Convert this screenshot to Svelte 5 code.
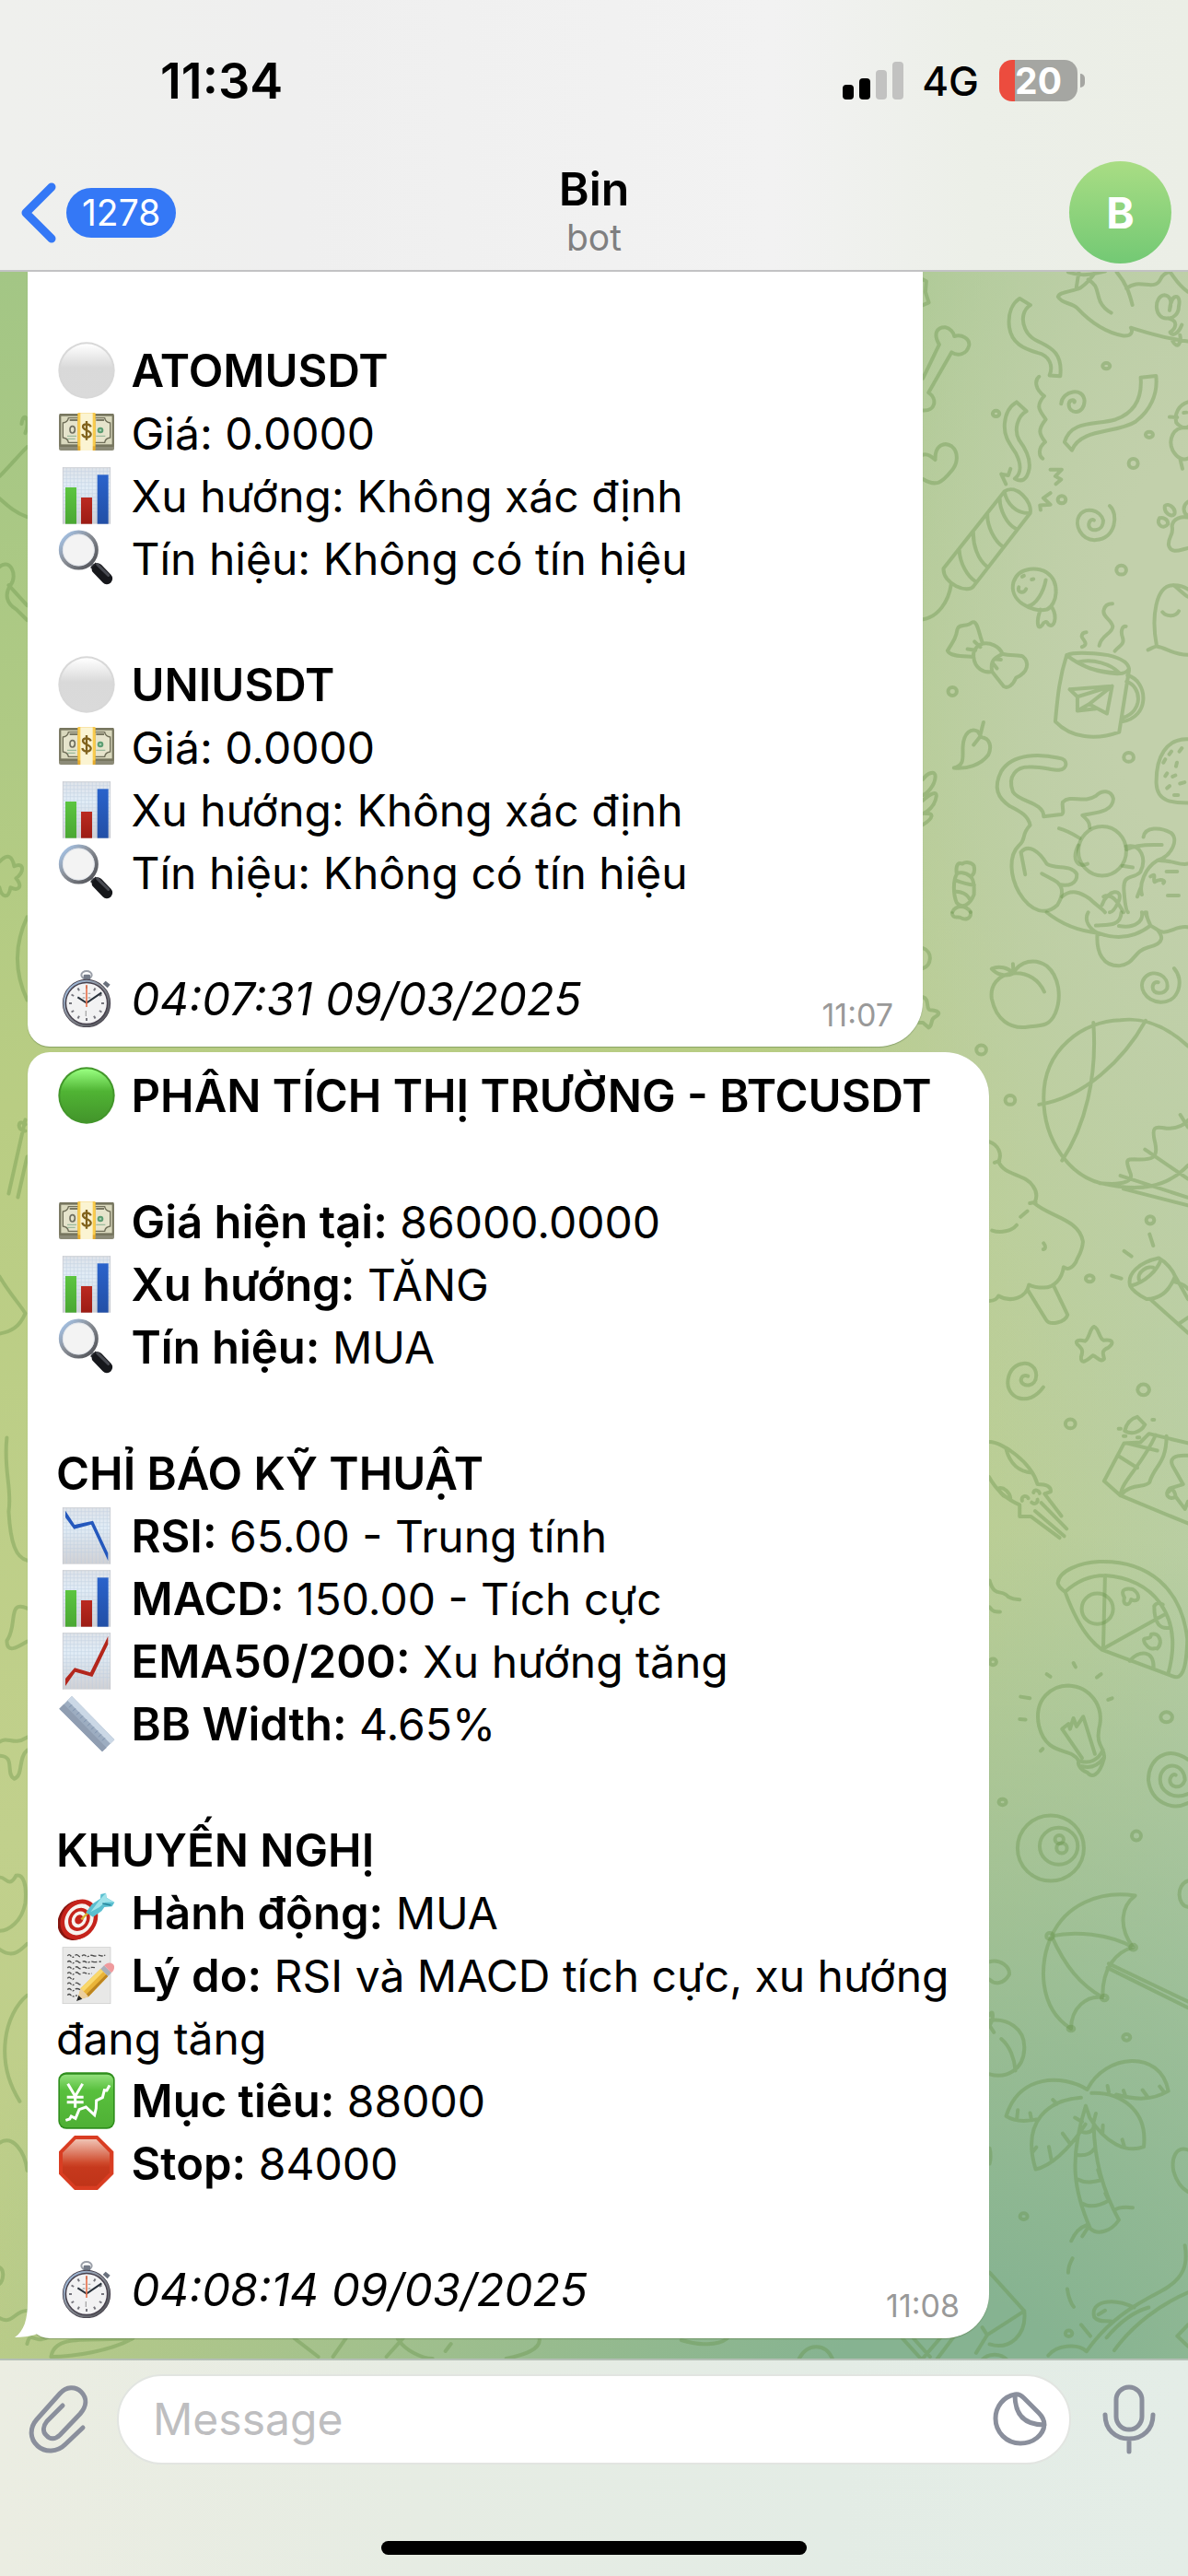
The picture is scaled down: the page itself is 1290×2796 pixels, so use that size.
<script lang="ts">
  type Line = { icon?: string; label?: string; text?: string };
  type Message = { id: number; size: string; blocks: Line[][]; stamp: string; time: string };

  const coin = (name: string): Line[] => [
    { icon: 'white', label: name },
    { icon: 'money', text: 'Giá: 0.0000' },
    { icon: 'bars', text: 'Xu hướng: Không xác định' },
    { icon: 'search', text: 'Tín hiệu: Không có tín hiệu' }
  ];

  const messages: Message[] = [
    {
      id: 1,
      size: 'first',
      blocks: [coin('ATOMUSDT'), coin('UNIUSDT')],
      stamp: '04:07:31 09/03/2025',
      time: '11:07'
    },
    {
      id: 2,
      size: 'last',
      blocks: [
        [{ icon: 'green', label: 'PHÂN TÍCH THỊ TRƯỜNG - BTCUSDT' }],
        [
          { icon: 'money', label: 'Giá hiện tại:', text: '86000.0000' },
          { icon: 'bars', label: 'Xu hướng:', text: 'TĂNG' },
          { icon: 'search', label: 'Tín hiệu:', text: 'MUA' }
        ],
        [
          { label: 'CHỈ BÁO KỸ THUẬT' },
          { icon: 'down', label: 'RSI:', text: '65.00 - Trung tính' },
          { icon: 'bars', label: 'MACD:', text: '150.00 - Tích cực' },
          { icon: 'up', label: 'EMA50/200:', text: 'Xu hướng tăng' },
          { icon: 'ruler', label: 'BB Width:', text: '4.65%' }
        ],
        [
          { label: 'KHUYẾN NGHỊ' },
          { icon: 'target', label: 'Hành động:', text: 'MUA' },
          { icon: 'memo', label: 'Lý do:', text: 'RSI và MACD tích cực, xu hướng đang tăng' },
          { icon: 'yen', label: 'Mục tiêu:', text: '88000' },
          { icon: 'stop', label: 'Stop:', text: '84000' }
        ]
      ],
      stamp: '04:08:14 09/03/2025',
      time: '11:08'
    }
  ];

  const ticks = Array.from({ length: 12 }, (_, i) => i * 30);
  const grid = Array.from({ length: 12 }, (_, i) => 28 + i * 12);
  let draft = $state('');
</script>

{#snippet sheet()}
  <rect x="15" y="1" width="156" height="184" fill="url(#paper)" />
  <g stroke="#b9cbe0" stroke-width="2" opacity=".6">
    {#each grid as g}
      <path d="M{g} 3V183" />
      <path d="M17 {g - 14}H169" />
    {/each}
  </g>
  <path d="M16 1V185M170 1V185M15 2H171" stroke="#c3c6cc" stroke-width="2" fill="none" />
{/snippet}

{#snippet emoji(name: string)}
  <svg class="emoji" viewBox="0 0 186 186" aria-hidden="true">
    {#if name === 'white' || name === 'green'}
      <circle cx="93" cy="93" r="92" fill={name === 'white' ? '#d8d8d8' : '#42962a'} />
      <circle cx="93" cy="93" r="86" fill={name === 'white' ? 'url(#ballWhite)' : 'url(#ballGreen)'} />
    {:else if name === 'money'}
      <rect x="3" y="32" width="180" height="118" rx="6" fill="#8c8b78" />
      <rect x="4" y="30" width="178" height="108" rx="3" fill="#77765f" />
      <rect x="10" y="38" width="166" height="92" fill="#d9d8bd" />
      <path d="M16 60Q32 58 34 44H152Q154 58 170 60V108Q154 110 152 124H34Q32 110 16 108Z" fill="#e6e4cc" stroke="#6f6e58" stroke-width="4" />
      <path d="M38 51H64M124 51H150" stroke="#55543f" stroke-width="5" />
      <path d="M30 103H60M30 112H56M124 103H154" stroke="#9dba9c" stroke-width="4" />
      <ellipse cx="47" cy="82" rx="8" ry="11" fill="none" stroke="#6f6f60" stroke-width="5" />
      <circle cx="138" cy="84" r="10" fill="#5b9c71" />
      <circle cx="138" cy="84" r="4" fill="#a5cfae" />
      <rect x="64" y="28" width="58" height="122" rx="3" fill="#e6ab2c" />
      <rect x="65" y="28" width="56" height="108" fill="#f9cc4c" />
      <rect x="73" y="28" width="40" height="122" fill="#fbf4d2" />
      <path d="M93 54V116M107 73C103 61 81 61 81 73C81 85 107 83 107 97C107 110 82 110 79 96" fill="none" stroke="#80621c" stroke-width="7" />
    {:else if name === 'bars'}
      {@render sheet()}
      <rect x="24" y="66" width="36" height="119" fill="url(#barGreen)" />
      <rect x="75" y="99" width="36" height="86" fill="url(#barRed)" />
      <rect x="128" y="25" width="36" height="160" fill="url(#barBlue)" />
    {:else if name === 'down'}
      {@render sheet()}
      <path d="M24 11V33L52 71L108 56L163 174V149L114 44L54 57Z" fill="#2458bd" />
    {:else if name === 'up'}
      {@render sheet()}
      <path d="M24 174V150L54 115L105 130L163 12V38L112 144L56 128Z" fill="#b3261c" />
    {:else if name === 'search'}
      <path d="M107 110L124 127" stroke="#8d9096" stroke-width="12" />
      <circle cx="67" cy="66" r="58" fill="#f3f3f3" stroke="url(#rim)" stroke-width="13" />
      <circle cx="67" cy="66" r="51" fill="none" stroke="#dfe3ea" stroke-width="3" />
      <path d="M128 127L159 159" stroke="#16171b" stroke-width="37" stroke-linecap="round" />
      <path d="M128 113L164 148" stroke="#484a51" stroke-width="9" stroke-linecap="round" />
      <path d="M107 125L124 108" stroke="#25262b" stroke-width="5" />
    {:else if name === 'ruler'}
      <path d="M4 44L45 3L184 145L144 184Z" fill="#9dadc1" />
      <path d="M45 3L184 145L171 158L31 17Z" fill="#cbd8e6" />
      <path d="M4 44L19 29L158 171L144 184Z" fill="#8f9db1" />
      <g stroke="#7d92ae" stroke-width="3">
        {#each grid.slice(1, 11) as g}
          <path d="M{g + 5} {g - 9}L{g - 4} {g}" />
        {/each}
      </g>
    {:else if name === 'target'}
      <g transform="rotate(35 66 112)">
        <ellipse cx="64" cy="120" rx="57" ry="69" fill="#83150f" />
        <ellipse cx="70" cy="113" rx="57" ry="69" fill="#c5231b" />
        <ellipse cx="70" cy="113" rx="44" ry="54" fill="#f7f3ef" />
        <ellipse cx="70" cy="113" rx="33" ry="40" fill="#c5231b" />
        <ellipse cx="70" cy="113" rx="23" ry="28" fill="#f7f3ef" />
        <ellipse cx="70" cy="113" rx="13" ry="16" fill="#c5231b" />
      </g>
      <path d="M76 115L104 87" stroke="#d6b332" stroke-width="7" />
      <path d="M91 92L110 66L138 47L139 33L156 29L158 44L184 59L176 73L151 75L142 88L114 107Z" fill="#5abfd0" />
      <path d="M139 47L156 29L158 45L184 59L154 59L134 76L106 91Z" fill="#9fe3ea" />
      <path d="M145 63L172 69" stroke="#27869c" stroke-width="4" />
    {:else if name === 'memo'}
      <rect x="15" y="2" width="156" height="183" fill="#e8e8e7" stroke="#c9c9c8" stroke-width="2" />
      <g fill="none" stroke="#4b4b4b" stroke-width="4" stroke-dasharray="15 4 6 5 19 7">
        <path d="M31 30Q36 22 42 30T54 30T66 29T78 30T90 29T102 30T114 29T126 29T138 29T154 27" />
        <path d="M31 50Q36 43 42 50T54 50T66 49T78 50T90 49T102 50T114 49T140 48" />
        <path d="M31 69Q36 62 42 69T54 69T66 68T78 69T90 68T102 69T120 68" />
        <path d="M31 87Q36 80 42 87T54 87T66 86T78 87T90 86T110 87" />
        <path d="M31 103Q36 96 42 103T52 103" />
        <path d="M31 121Q36 114 42 121T54 121T66 120T80 121" />
        <path d="M31 140Q36 133 42 140T54 140T72 140" />
        <path d="M31 158Q36 151 42 158T62 158" />
      </g>
      <path d="M63 173L74 135L139 72L163 96L99 163Z" fill="#e9b439" />
      <path d="M74 135L139 72L148 81L83 146Z" fill="#f9d86b" />
      <path d="M92 155L157 90L163 96L99 163Z" fill="#bd851f" />
      <path d="M63 173L74 135L84 146L92 154L99 163Z" fill="#ecd0a0" />
      <path d="M60 177L67 158L79 170Z" fill="#262626" />
      <path d="M139 72L150 61L174 85L163 96Z" fill="#a9afb9" />
      <path d="M150 61C160 48 180 50 183 63C184 72 181 79 174 85Z" fill="#ef9a9d" />
    {:else if name === 'yen'}
      <rect x="1" y="1" width="184" height="184" rx="26" fill="#2f8f1d" />
      <rect x="6" y="8" width="174" height="172" rx="20" fill="url(#yenFace)" />
      <g fill="none" stroke="#fff" stroke-width="9">
        <path d="M32 38L56 79L80 38M56 79V116M29 82H83M29 98H83" />
        <path d="M25 157L38 153L43 144L57 151L69 122L91 114L119 140L124 119L125 93L145 83L151 59L159 60L168 43" />
      </g>
    {:else if name === 'stop'}
      <path d="M54 3H129L181 55V128L129 180H54L3 128V55Z" fill="#d93d22" />
      <path d="M58 15H125L168 59V124L125 167H58L15 124V59Z" fill="url(#stopFace)" />
    {:else if name === 'clock'}
      <ellipse cx="93" cy="16" rx="17" ry="13" fill="none" stroke="#9a9fa8" stroke-width="6" />
      <rect x="83" y="14" width="22" height="22" rx="4" fill="#747b88" />
      <path d="M146 44L155 35L170 47L161 58Z" fill="#6a717d" />
      <circle cx="93" cy="108" r="72" fill="#f2f2f3" stroke="#47414d" stroke-width="13" />
      <circle cx="93" cy="108" r="73" fill="none" stroke="url(#rim)" stroke-width="6" />
      {#each ticks as t}
        <path d="M93 51V60" stroke="#75757c" stroke-width="6" transform="rotate({t} 93 108)" />
      {/each}
      <path d="M80 76H88M98 76H106M80 90H88M98 90H106M91 132V150" stroke="#aaa" stroke-width="4" />
      <path d="M64 88L93 107L142 73" fill="none" stroke="#29323b" stroke-width="6" />
      <path d="M93 48V120" stroke="#e8734f" stroke-width="5" />
    {/if}
  </svg>
{/snippet}

<svg class="defs" aria-hidden="true">
  <defs>
    <linearGradient id="ballWhite" x2="0" y2="1"><stop offset="0" stop-color="#fff" /><stop offset=".45" stop-color="#d9d9d9" /><stop offset="1" stop-color="#dadada" /></linearGradient>
    <linearGradient id="ballGreen" x2="0" y2="1"><stop offset="0" stop-color="#98ff80" /><stop offset=".42" stop-color="#50b434" /><stop offset="1" stop-color="#43952b" /></linearGradient>
    <linearGradient id="paper" x2="0" y2="1"><stop offset="0" stop-color="#dfe3e9" /><stop offset=".35" stop-color="#e2edf7" /><stop offset="1" stop-color="#cfd0d4" /></linearGradient>
    <linearGradient id="barGreen" x2="0" y2="1"><stop offset="0" stop-color="#5cc540" /><stop offset="1" stop-color="#4aa733" /></linearGradient>
    <linearGradient id="barRed" x2="0" y2="1"><stop offset="0" stop-color="#bb2a20" /><stop offset="1" stop-color="#9c1c14" /></linearGradient>
    <linearGradient id="barBlue" x2="0" y2="1"><stop offset="0" stop-color="#2a63cb" /><stop offset="1" stop-color="#224fa6" /></linearGradient>
    <linearGradient id="rim" x2="1" y2="1"><stop offset="0" stop-color="#a9cbf3" /><stop offset=".45" stop-color="#8b9098" /><stop offset="1" stop-color="#4a4b50" /></linearGradient>
    <linearGradient id="yenFace" x2="0" y2="1"><stop offset="0" stop-color="#93e07c" /><stop offset=".3" stop-color="#58c03d" /><stop offset="1" stop-color="#4fb035" /></linearGradient>
    <linearGradient id="stopFace" x2="0" y2="1"><stop offset="0" stop-color="#f0c3b4" /><stop offset=".5" stop-color="#cf4a2c" /><stop offset=".6" stop-color="#c6391d" /><stop offset="1" stop-color="#c03419" /></linearGradient>
  </defs>
</svg>

<div class="app">
  <header>
    <div class="status">
      <span class="clock">11:34</span>
      <div class="indicators">
        <svg class="signal" viewBox="0 0 66 42" aria-label="Signal">
          <rect x="0" y="25" width="12" height="16" rx="4" />
          <rect x="18" y="18" width="12" height="23" rx="4" />
          <rect x="36" y="9" width="12" height="32" rx="4" fill="#c2c2c1" />
          <rect x="54" y="0" width="12" height="41" rx="4" fill="#c2c2c1" />
        </svg>
        <span class="network">4G</span>
        <span class="battery">20</span>
      </div>
    </div>
    <nav>
      <button class="back" aria-label="Back, 1278 unread">
        <svg class="chevron" viewBox="0 0 40 66" aria-hidden="true"><path d="M34 5L6 33L34 61" /></svg>
        <span class="count">1278</span>
      </button>
      <div class="title">
        <h1>Bin</h1>
        <span>bot</span>
      </div>
      <button class="avatar" aria-label="Profile">B</button>
    </nav>
  </header>

  <main>
    <svg class="doodles" viewBox="0 0 1290 2264" preserveAspectRatio="xMaxYMin slice" aria-hidden="true">
      <g transform="translate(990 -5) scale(.3333 .4464)">
        <path d="M37 30L48 34L45 60L56 86L37 92M37 270L90 188C68 160 85 145 110 146C125 148 137 158 139 168C165 162 190 175 187 190C180 213 150 217 130 207L55 305C85 320 78 350 37 348M37 456C50 452 65 460 77 468C75 430 110 425 130 435C155 450 150 478 130 495C100 523 80 535 37 515" />
        <path d="M352 76L387 92C365 102 355 125 370 150C390 185 440 180 470 210C485 225 487 245 484 265L449 263C462 240 450 215 410 208C365 198 325 185 318 145C313 112 328 88 352 76ZM342 328L374 350C345 362 332 395 350 420C380 450 395 480 375 508C365 520 350 520 336 514C360 500 355 475 340 453C315 425 300 410 303 380C306 355 318 338 342 328M415 266C400 275 402 297 432 313C400 340 420 350 437 370C410 395 415 405 435 425C410 440 415 460 427 465" />
        <path d="M487 332C490 300 560 290 563 325C562 360 510 358 512 332C515 320 535 322 530 328M746 268L796 264C803 310 775 350 730 375C670 405 550 390 522 445L498 425C520 370 600 385 665 370C720 355 752 325 746 268M477 72C480 60 520 60 550 50C570 40 585 28 600 10M477 72C490 90 520 85 540 100C590 140 640 160 690 167C715 168 722 158 714 147C750 155 830 175 900 180M575 30C610 45 600 60 615 85C625 100 635 105 650 111M510 12C560 25 600 15 630 10M545 10L536 52M668 12C700 40 710 65 719 92M700 52C740 25 790 60 810 30C815 20 830 12 842 12C860 30 870 45 900 60M835 124C790 130 785 70 825 68C840 70 850 80 840 105C845 60 880 65 870 95C870 115 850 125 835 124M838 125C870 130 860 150 842 158C850 170 870 160 880 140M850 180C865 200 880 185 874 165" />
        <ellipse cx="634" cy="240" rx="12" ry="7" /><ellipse cx="275" cy="356" rx="11" ry="7" /><ellipse cx="774" cy="407" rx="12" ry="7" /><ellipse cx="722" cy="477" rx="15" ry="11" /><ellipse cx="489" cy="565" rx="13" ry="9" /><ellipse cx="683" cy="736" rx="16" ry="11" /><ellipse cx="133" cy="1031" rx="14" ry="10" /><ellipse cx="707" cy="1191" rx="16" ry="11" />
        <path d="M900 328C870 335 855 355 862 378C880 395 900 390 900 388M900 390C850 385 835 420 850 445C865 465 885 470 900 465M875 468L882 490M840 364L865 365M886 354L895 353M292 503L315 506L322 490M292 503L307 527M452 492L489 492L468 508L487 516L470 527M452 549L429 561L452 577L418 579L420 590" />
        <path d="M104 732L302 545C340 525 395 570 386 598L202 775C185 795 100 770 104 732ZM302 545C310 575 340 600 386 598M287 562C287 590 310 625 340 636M247 600C245 630 270 665 298 680M201 645C200 675 215 710 246 728M155 687C158 720 180 750 208 764M129 770C120 815 85 850 37 856" />
        <path d="M645 580C675 600 665 660 600 663C550 665 530 625 545 605C565 580 615 590 624 615C625 645 575 645 577 625C580 612 590 613 594 615M332 765C350 725 420 730 440 742C485 765 475 820 440 832C390 840 315 810 332 765ZM437 760C430 790 405 820 379 824M420 832C405 860 410 885 425 870C430 862 440 858 445 868C465 880 475 850 458 828M349 778C342 790 365 795 373 782M360 752L366 750M391 759L397 758" />
        <path d="M117 932C135 910 145 900 149 880C155 865 180 875 195 864C215 855 218 890 232 915C255 912 285 920 296 940C320 945 350 942 362 946C385 960 380 985 340 998C330 1015 315 1025 300 1019L262 983C235 987 205 975 202 947C170 945 125 947 117 932M232 915C210 920 198 935 202 947M296 940C270 950 255 955 262 983M205 910L224 923M182 928L208 931M270 952L291 954M265 963L278 975" />
        <path d="M505 943C480 1000 475 1050 468 1104C520 1145 600 1150 676 1130L708 980C710 960 680 950 640 943C590 938 530 935 505 943C550 970 600 985 670 988C690 988 705 985 708 975M541 960C590 950 650 965 676 986C630 985 580 980 541 960M703 992C770 1005 780 1095 682 1105M700 1007C750 1020 755 1080 688 1095M515 1026L653 1018L636 1085L578 1062L653 1018L540 1044L515 1026M540 1044L540 1078L600 1073M540 1078L578 1062" />
        <path d="M555 923C580 915 555 905 554 897C555 890 562 887 569 887M611 920C615 895 655 890 655 873C650 855 620 850 626 833C630 820 645 818 654 818M662 933C675 920 695 918 687 900C680 885 685 872 698 873M770 930C785 925 795 920 800 922C830 925 850 942 900 942M798 920C780 850 795 775 850 773C870 772 890 778 900 783M853 773C870 782 885 795 900 801M817 838C830 850 860 850 870 836M138 1217C175 1210 165 1190 167 1165C170 1130 195 1120 215 1128L227 1142C255 1145 262 1165 250 1185C225 1210 180 1220 138 1217M234 1106L222 1142L202 1161M37 1245C50 1230 80 1220 77 1240C75 1260 50 1280 37 1283M37 1296C60 1280 85 1270 80 1288C75 1310 50 1325 37 1328M45 1328C75 1325 70 1340 37 1355" />
        <path d="M807 610C795 625 820 640 835 624C835 610 815 608 807 610M825 580C820 595 845 610 856 600C862 585 835 572 825 580M900 570C880 580 885 600 900 603M900 608C880 605 850 610 848 630C855 650 835 655 837 675C845 700 880 685 900 683M900 1147C830 1145 795 1190 797 1255C800 1300 850 1302 900 1302" />
        <path d="M820 1204L826 1196M839 1184L846 1177M872 1177L880 1169M861 1213L864 1204M826 1237L832 1230M850 1238L859 1235M832 1266L840 1261M874 1255L889 1252M855 1283L868 1283" />
        <path d="M430 1335L487 1330C500 1328 488 1310 492 1300C520 1280 560 1305 600 1285C620 1270 650 1270 657 1292C655 1325 600 1325 556 1332C575 1345 580 1350 580 1362M430 1335C430 1300 350 1300 330 1275C310 1235 345 1215 380 1215C420 1212 450 1222 480 1222C510 1220 510 1195 480 1193C420 1183 330 1180 292 1225C265 1265 280 1290 320 1310C360 1325 380 1335 386 1356C355 1380 375 1390 350 1405C315 1430 320 1480 350 1520C390 1570 440 1575 475 1550C500 1520 490 1500 465 1490L424 1474M356 1422C380 1400 415 1420 440 1450C470 1465 520 1450 538 1475C540 1500 510 1505 480 1500M356 1422L370 1476" />
        <ellipse cx="621" cy="1419" rx="78" ry="60" />
        <path d="M480 1364C510 1370 530 1380 548 1388M543 1405C520 1440 540 1460 573 1450M698 1408C750 1400 765 1440 745 1470C720 1490 685 1470 692 1520C695 1550 700 1568 705 1568M700 1415C740 1400 790 1405 815 1404M686 1455L720 1459M755 1385C760 1360 810 1360 845 1375C870 1390 850 1430 800 1442C760 1460 740 1500 750 1525M800 1442C850 1440 870 1455 900 1450M778 1481C800 1470 785 1485 791 1494C810 1485 830 1490 820 1497M830 1469H865M834 1527H870M490 1530C520 1510 550 1520 580 1535C600 1550 620 1558 630 1568M620 1550C640 1510 690 1510 675 1540C660 1565 650 1568 645 1568M625 1530C650 1520 670 1540 690 1568M735 1530L745 1510" />
        <path d="M147 1475C143 1455 150 1445 165 1450C175 1445 195 1445 203 1455C208 1470 200 1480 190 1480M147 1475C135 1490 135 1525 147 1545C165 1560 190 1550 203 1525C205 1500 200 1485 190 1480C175 1470 150 1470 147 1475M142 1490C160 1495 180 1500 204 1502M141 1517C160 1518 180 1520 192 1540M133 1567C145 1550 175 1550 192 1567" />
      </g>
      <g transform="translate(990 695) scale(.3333 .4464)">
        <path d="M132 2C135 18 150 8 160 13C175 20 195 15 192 0M37 87C70 95 65 130 37 136M37 206C60 210 45 235 60 237C85 238 100 245 75 255C60 260 70 275 55 280L37 268L22 268" />
        <path d="M330 148C280 150 255 180 261 210C275 260 320 285 380 278C430 275 450 275 468 245C490 205 480 155 440 130C400 110 355 118 330 148C380 145 415 165 432 193M330 125L332 148M261 137C285 128 315 135 332 148C305 158 275 150 261 137M855 136C890 165 870 220 810 218C760 215 735 180 760 158C790 135 840 155 832 185C820 200 785 200 785 182C785 172 795 168 803 170" />
        <path d="M440 0C490 30 540 45 607 50C660 65 720 65 778 32L760 0M575 0C560 20 580 40 605 50M605 50C600 100 625 130 675 130C730 125 720 95 770 85C830 75 815 55 800 42L778 32C770 20 765 10 765 0M600 32C640 30 680 35 683 0M750 0C755 20 730 40 675 33M800 42C830 60 860 30 900 36" />
        <path d="M900 325C820 270 750 255 680 262C560 265 430 330 430 450C430 560 520 640 615 658C740 680 830 670 900 615M415 467C560 450 690 360 762 263M592 268C605 400 565 520 490 603M612 658C700 665 720 650 713 635C695 600 700 600 725 600C780 602 805 600 793 560C780 520 790 520 830 525C870 525 890 515 900 505M680 640L900 693M760 576L900 648M875 492L900 522M690 672L900 712" />
        <ellipse cx="227" cy="334" rx="16" ry="11" /><ellipse cx="321" cy="456" rx="16" ry="11" /><ellipse cx="777" cy="748" rx="13" ry="9" /><ellipse cx="580" cy="890" rx="13" ry="8" /><ellipse cx="755" cy="1160" rx="19" ry="13" /><ellipse cx="517" cy="1243" rx="16" ry="11" />
        <path d="M252 557C285 565 295 590 283 605C300 640 370 635 395 665C410 680 408 695 400 707C450 740 545 745 558 800C555 830 540 835 535 850C520 868 505 868 495 862C490 890 465 912 430 912C415 912 395 910 382 905C375 935 325 950 283 932C275 945 260 944 252 944M262 773C290 780 325 775 342 760M355 740L377 726M270 608L286 604M385 707L404 704M430 804C438 812 436 818 429 819M380 920L438 990C450 1005 500 997 508 978L463 908" />
        <path d="M712 908C700 880 740 850 805 840C830 850 850 870 858 884C840 920 810 940 765 940C740 930 720 920 712 908C760 900 800 870 812 844M742 895C730 875 770 855 792 865M780 942L900 1022M858 884L900 940M870 1000L900 985M852 897C870 900 890 905 900 915M775 782L787 810M692 823L716 836M652 883L683 890" />
        <path d="M594 1007C610 1010 610 1035 625 1040C650 1037 665 1045 640 1058C615 1065 625 1075 627 1085C615 1095 605 1080 590 1077C570 1090 550 1100 552 1080C560 1065 555 1060 540 1050C530 1040 545 1038 565 1042C580 1035 580 1010 594 1007M429 1154C380 1205 305 1180 314 1135C325 1085 405 1085 406 1125C405 1155 360 1155 356 1137C358 1125 370 1124 379 1127" />
        <path d="M252 1287C290 1285 390 1335 410 1390C440 1390 455 1395 453 1408L433 1413M252 1372C280 1410 320 1430 352 1440V1468H388L482 1520M308 1305C320 1340 350 1360 392 1362M282 1400C300 1395 320 1410 322 1424C300 1422 290 1415 282 1400M433 1413L488 1467M422 1435L505 1498M402 1455L497 1516M360 1430C355 1418 375 1415 380 1424M397 1410C400 1400 415 1405 417 1412M391 1434C400 1440 412 1435 410 1427" />
        <path d="M627 1382L692 1290L745 1288L773 1267L900 1290M627 1382L680 1417L900 1485M680 1417C685 1380 750 1345 795 1270M680 1417C715 1385 760 1400 775 1385C790 1345 830 1340 830 1273M671 1320L735 1350M700 1290L800 1308M694 1260C700 1240 715 1230 735 1226L760 1245C745 1265 715 1270 694 1260M900 1320C850 1318 840 1330 850 1345L884 1390L840 1400C820 1415 840 1430 860 1420C855 1400 845 1400 838 1408M860 1420L890 1450L900 1432" />
        <path d="M674 1255H681M690 1273H697M735 1276H742M784 1233H790" />
      </g>
      <g transform="translate(1060 1395) scale(.3333 .5549)">
        <path d="M44 45C60 80 85 60 105 77C120 82 130 82 142 82M44 97C55 107 65 106 78 106M266 50C270 25 340 10 400 8C560 5 670 60 688 160C685 220 670 240 640 232L410 180C350 155 310 100 290 67C280 62 270 60 266 50M290 67C330 45 370 35 420 35C570 40 680 110 625 228M420 35L414 178L612 112M500 202C530 180 580 180 578 217M580 95C580 130 600 140 630 137M580 95C590 85 600 90 608 92" />
        <ellipse cx="395" cy="100" rx="51" ry="30" />
        <path d="M483 78C465 60 495 60 510 62C535 70 535 90 505 82C500 95 475 95 483 78M550 168C535 150 570 165 570 150C595 145 610 165 590 178C580 175 570 185 550 168" />
        <path d="M205 330C185 275 250 250 300 250C370 252 420 290 400 335C390 370 420 370 417 392C400 430 375 430 362 420C340 415 330 405 334 397C310 370 230 390 205 330ZM280 335L345 392M280 335L301 325L306 335L317 314L327 330L349 311L387 384M334 397C370 405 400 395 413 376M345 408C370 412 395 408 415 392M317 206L324 214M230 228L242 233M393 234L407 228M145 272L175 275M142 316L161 317M430 278L443 275M210 378L217 374" />
        <ellipse cx="243" cy="568" rx="108" ry="64" /><ellipse cx="269" cy="564" rx="62" ry="36" /><ellipse cx="271" cy="551" rx="14" ry="8" /><ellipse cx="279" cy="568" rx="17" ry="10" />
        <ellipse cx="55" cy="204" rx="11" ry="6" /><ellipse cx="620" cy="312" rx="19" ry="10" /><ellipse cx="86" cy="478" rx="12" ry="6" /><ellipse cx="522" cy="544" rx="15" ry="9" /><ellipse cx="490" cy="938" rx="12" ry="6" /><ellipse cx="155" cy="1288" rx="12" ry="6" /><ellipse cx="302" cy="1517" rx="11" ry="6" />
        <path d="M690 395C620 365 560 395 561 435C570 480 640 495 690 480M690 462C640 475 590 455 601 425C620 395 680 405 680 435C670 455 625 450 632 432C637 424 645 423 650 425M690 632C650 640 655 680 690 683" />
        <path d="M246 740C290 680 400 650 518 661C475 680 460 720 511 762C460 770 410 800 412 860C360 855 310 880 309 921C200 880 205 790 246 740C320 730 430 735 511 762M246 740C290 800 340 835 412 860M432 794L690 868M428 802L690 880" />
        <ellipse cx="240" cy="740" rx="11" ry="6" /><ellipse cx="512" cy="762" rx="10" ry="5" /><ellipse cx="418" cy="861" rx="10" ry="5" /><ellipse cx="309" cy="921" rx="10" ry="4" />
        <path d="M44 790C80 785 110 800 108 815C90 835 60 835 44 825M44 905C100 900 160 920 157 960C155 1000 100 1020 44 1010M82 941C110 955 125 980 128 1003M44 895C55 880 60 900 44 915L58 928M44 1155C48 1165 48 1175 44 1185" />
        <path d="M362 1040C280 1010 140 1010 98 1092C130 1105 170 1102 202 1098M342 1056C240 1060 145 1100 194 1196C240 1190 300 1160 356 1108M362 1040C420 970 600 960 626 1043C570 1062 520 1060 456 1050M376 1047C470 1045 560 1080 546 1152C490 1165 420 1145 370 1095L357 1072M357 1072C300 1180 320 1240 372 1312C395 1325 440 1318 465 1295C410 1235 385 1175 383 1110M338 1118C350 1128 375 1125 382 1115M330 1168C355 1170 375 1165 386 1155M327 1215C360 1225 385 1220 407 1217L397 1197M343 1262C370 1272 400 1268 432 1257L421 1243M453 1275C470 1268 495 1270 510 1271M310 1336C325 1315 345 1308 360 1305M346 1327L364 1310M133 1096L136 1080M180 1098L176 1086M263 1068L250 1060M183 1163L196 1153M246 1180L237 1152M305 1145L282 1126M345 1103L322 1095M383 1103L390 1087M412 1125L413 1110M482 1150L476 1138M432 1045L428 1033M488 1055L480 1042M558 1054L542 1041M612 1045L598 1034" />
        <path d="M690 1158C650 1150 635 1175 643 1200C655 1225 675 1235 690 1240M314 1370C300 1385 300 1395 300 1398M297 1430C300 1445 310 1460 318 1465M342 1500L372 1522M44 1398L157 1473L36 1520M157 1473C165 1520 110 1550 44 1538M0 1555L36 1520L20 1505M20 1568C40 1555 80 1555 100 1568M235 1560C260 1540 330 1535 360 1552C430 1490 520 1460 600 1435C680 1410 690 1380 680 1345M425 1525C460 1500 510 1475 562 1466M450 1550C510 1500 600 1460 690 1437M385 1485C370 1455 440 1445 515 1466M385 1485C400 1497 425 1490 445 1494M398 1480L420 1472M655 1522L690 1500M655 1522L690 1542" />
      </g>
      <path d="M0 222C12 210 20 200 30 190M0 246C10 255 18 262 30 266M0 320C12 310 20 330 12 340C5 350 8 360 18 366L30 378M10 340L30 362M24 165C26 150 34 160 28 175M0 640C10 630 14 635 16 645C26 640 28 650 18 658C26 668 20 672 12 668C10 682 2 678 0 668M30 700C16 730 16 760 30 790M28 925C20 918 18 932 28 932M10 1000L28 920M20 1004L30 960M0 1090C12 1110 22 1120 28 1130C22 1145 12 1150 0 1152M8 1265C4 1300 14 1320 10 1345C12 1380 18 1395 30 1398M30 1450C8 1440 20 1470 8 1485C8 1500 20 1492 30 1486M0 1595C10 1588 14 1600 30 1590M0 1610C18 1610 6 1630 16 1635C26 1632 20 1612 30 1604M0 1742C6 1740 10 1755 18 1740C26 1738 30 1750 28 1770C24 1790 10 1800 0 1800M0 1820C14 1830 22 1822 30 1814M30 1870C6 1890 -6 1940 22 1985M0 2030C14 2020 28 2040 30 2060M0 2165C6 2168 4 2180 0 2183M0 2220C14 2228 16 2212 30 2212M30 2248C34 2232 38 2250 54 2240M56 2262C60 2236 100 2246 145 2242C120 2256 80 2262 56 2262M320 2242L346 2262M362 2262L376 2242M420 2262L438 2242M432 2242C440 2256 460 2264 470 2264M484 2256L490 2248M586 2242C588 2254 570 2260 550 2264M740 2244C760 2250 780 2250 790 2242M868 2264C876 2248 896 2246 904 2264M980 2242L1000 2264M992 2242L1010 2262M1002 2264L1026 2236M1018 2264L1036 2240" />
    </svg>

    {#each messages as message (message.id)}
      <article class="bubble {message.size}">
        {#each message.blocks as block}
          <div class="block">
            {#each block as line}
              <p>{#if line.icon}{@render emoji(line.icon)}{' '}{/if}{#if line.label}<strong>{line.label}</strong>{' '}{/if}{line.text ?? ''}</p>
            {/each}
          </div>
        {/each}
        <div class="foot">
          <p>{@render emoji('clock')}{' '}<em>{message.stamp}</em></p>
          <time>{message.time}</time>
        </div>
        {#if message.size === 'last'}
          <svg class="tail" viewBox="0 0 50 40" aria-hidden="true"><path d="M14 0C14 20 10 32 0 39C16 39 28 35 34 30C40 35 44 38 50 40V0Z" /></svg>
        {/if}
      </article>
    {/each}
  </main>

  <footer>
    <form>
      <button type="button" aria-label="Attach">
        <svg class="clip" viewBox="0 0 68 78" aria-hidden="true"><path d="M61 48L42 66C33 75 20 75 12 68C3 60 3 48 11 39L36 11C43 3 53 3 59 9C66 16 65 25 58 33L36 56C31 61 25 61 21 56C17 52 18 46 22 41L39 24" /></svg>
      </button>
      <div class="field">
        <input type="text" placeholder="Message" aria-label="Message" bind:value={draft} />
        <button type="button" aria-label="Stickers">
          <svg class="sticker" viewBox="0 0 64 64" aria-hidden="true"><path d="M26 5C14 7 5 18 5 31C5 46 17 58 32 58C46 58 57 49 58 38C58 33 56 29 52 25L36 9C33 6 30 4 26 5C26 22 32 38 58 38" /></svg>
        </button>
      </div>
      <button type="button" aria-label="Record voice message">
        <svg class="mic" viewBox="0 0 60 78" aria-hidden="true"><rect x="16" y="4" width="28" height="46" rx="14" /><path d="M4 34C4 50 15 60 30 60C45 60 56 50 56 34M30 60V74" /></svg>
      </button>
    </form>
    <div class="home"></div>
  </footer>
</div>

<style>
  :global(body) {
    margin: 0;
  }
  .app {
    display: flex;
    flex-direction: column;
    min-height: 100vh;
    font-family: Inter, 'Noto Sans', sans-serif;
    color: #000;
  }
  .app :global(*) {
    box-sizing: border-box;
  }
  button {
    border: 0;
    padding: 0;
    background: none;
    font: inherit;
    color: inherit;
    display: flex;
    align-items: center;
  }
  svg {
    display: block;
    flex: none;
  }
  .defs {
    position: absolute;
    width: 0;
    height: 0;
  }

  header {
    background: linear-gradient(90deg, #eff0ed, #efefef 25%, #f2f2f2 65%, #ecefe8 82%, #ebeee6);
    border-bottom: 2px solid #c2c2c4;
    position: relative;
    z-index: 1;
  }
  .status {
    height: 175px;
    padding: 0 112px 0 174px;
    display: flex;
    align-items: center;
    justify-content: space-between;
  }
  .clock {
    font-size: 54px;
    font-weight: 600;
    line-height: 62px;
  }
  .indicators {
    display: flex;
    align-items: center;
  }
  .signal {
    width: 66px;
    height: 42px;
    margin-right: 20px;
  }
  .network {
    font-size: 44px;
    font-weight: 500;
    line-height: 54px;
    margin-right: 22px;
  }
  .battery {
    position: relative;
    width: 85px;
    height: 45px;
    border-radius: 14px;
    background: linear-gradient(90deg, #ec4c3e 17px, #a5a6a2 17px);
    color: #fff;
    font-size: 39px;
    font-weight: 700;
    line-height: 45px;
    text-align: center;
    margin-right: 8px;
  }
  .battery::after {
    content: '';
    position: absolute;
    left: 88px;
    top: 15px;
    width: 5px;
    height: 15px;
    border-radius: 0 8px 8px 0;
    background: #a5a6a2;
  }
  nav {
    display: grid;
    grid-template-columns: 1fr auto 1fr;
    align-items: center;
    height: 118px;
    padding: 0 18px 8px;
  }
  .back {
    padding-left: 4px;
  }
  .chevron {
    width: 40px;
    height: 66px;
    margin-right: 10px;
    fill: none;
    stroke: #3478f6;
    stroke-width: 9;
    stroke-linecap: round;
    stroke-linejoin: round;
  }
  .count {
    height: 54px;
    padding: 0 17px;
    border-radius: 27px;
    background: #3478f6;
    color: #fff;
    font-size: 39px;
    line-height: 54px;
  }
  .title {
    text-align: center;
    padding-bottom: 5px;
  }
  h1 {
    margin: 0 0 3px;
    font-size: 50px;
    font-weight: 600;
    line-height: 56px;
  }
  .title span {
    display: block;
    font-size: 39px;
    line-height: 44px;
    color: #7f7f80;
  }
  .avatar {
    justify-self: end;
    justify-content: center;
    width: 111px;
    height: 111px;
    border-radius: 50%;
    background: linear-gradient(#a9dd84, #73c974);
    color: #fff;
    font-size: 46px;
    font-weight: 700;
  }

  main {
    flex: 1;
    position: relative;
    overflow: hidden;
    display: flex;
    flex-direction: column;
    align-items: flex-start;
    justify-content: flex-end;
    gap: 6px;
    padding: 0 30px 22px;
    background:
      radial-gradient(85% 42% at 80% 102%, #86b391 12%, transparent),
      radial-gradient(36% 45% at 100% 18%, #c2d0ab 20%, transparent),
      linear-gradient(90deg, transparent 65%, rgb(182 205 172 / 70%)),
      linear-gradient(#a3c685, #b9cd83 40%, #c1d08c 75%, #bccd88);
  }
  .doodles {
    position: absolute;
    inset: 0;
    width: 100%;
    height: 100%;
    fill: none;
    stroke: #648f45;
    stroke-opacity: 0.36;
  }
  .doodles :global(*) {
    stroke-width: 4px;
    vector-effect: non-scaling-stroke;
    stroke-linecap: round;
    stroke-linejoin: round;
  }
  .bubble {
    position: relative;
    max-width: 100%;
    background: #fff;
    font-size: 48px;
    line-height: 68px;
    box-shadow: 0 1px 1px rgb(80 110 60 / 45%);
  }
  .first {
    width: 972px;
    padding: 74px 32px 17px 31px;
    border-radius: 0 0 48px 24px;
  }
  .last {
    width: 1044px;
    padding: 14px 32px 18px 31px;
    border-radius: 24px 48px 48px 24px;
  }
  .block {
    margin-bottom: 69px;
  }
  p {
    margin: 0;
  }
  strong,
  em {
    font-size: 49px;
    font-weight: 600;
    line-height: 60px;
  }
  em {
    font-weight: 400;
  }
  .emoji {
    display: inline-block;
    width: 62px;
    height: 62px;
    margin: 0 4px 0 2px;
    vertical-align: -13px;
  }
  .foot {
    display: flex;
    align-items: flex-end;
    justify-content: space-between;
  }
  time {
    font-size: 34px;
    line-height: 34px;
    color: #999;
  }
  .tail {
    position: absolute;
    left: -14px;
    bottom: 0;
    width: 50px;
    height: 40px;
    fill: #fff;
  }

  footer {
    height: 237px;
    display: flex;
    flex-direction: column;
    justify-content: space-between;
    align-items: center;
    padding: 15px 0 24px;
    border-top: 2px solid #b4bfb5;
    background: linear-gradient(90deg, #ebede2, #e6ece3 35%, #e3ece5 70%, #e4ede7);
  }
  form {
    width: 100%;
    display: flex;
    align-items: center;
    gap: 30px;
    padding: 0 34px 0 29px;
    color: #8a8f9c;
  }
  form svg {
    fill: none;
    stroke: #8a8f9c;
    stroke-width: 5;
    stroke-linecap: round;
    stroke-linejoin: round;
  }
  .field {
    flex: 1;
    display: flex;
    align-items: center;
    height: 98px;
    padding: 0 21px 0 37px;
    margin-right: 3px;
    border: 2px solid #e2e5e1;
    border-radius: 49px;
    background: #fff;
  }
  input {
    flex: 1;
    min-width: 0;
    border: 0;
    padding: 0;
    outline: 0;
    background: none;
    font: inherit;
    font-size: 48px;
    line-height: 60px;
    color: #000;
  }
  input::placeholder {
    color: #bebec0;
    opacity: 1;
  }
  .clip {
    width: 68px;
    height: 78px;
  }
  .sticker {
    width: 64px;
    height: 64px;
  }
  .mic {
    width: 60px;
    height: 78px;
  }
  .home {
    width: 462px;
    height: 15px;
    border-radius: 8px;
    background: #000;
  }
</style>
